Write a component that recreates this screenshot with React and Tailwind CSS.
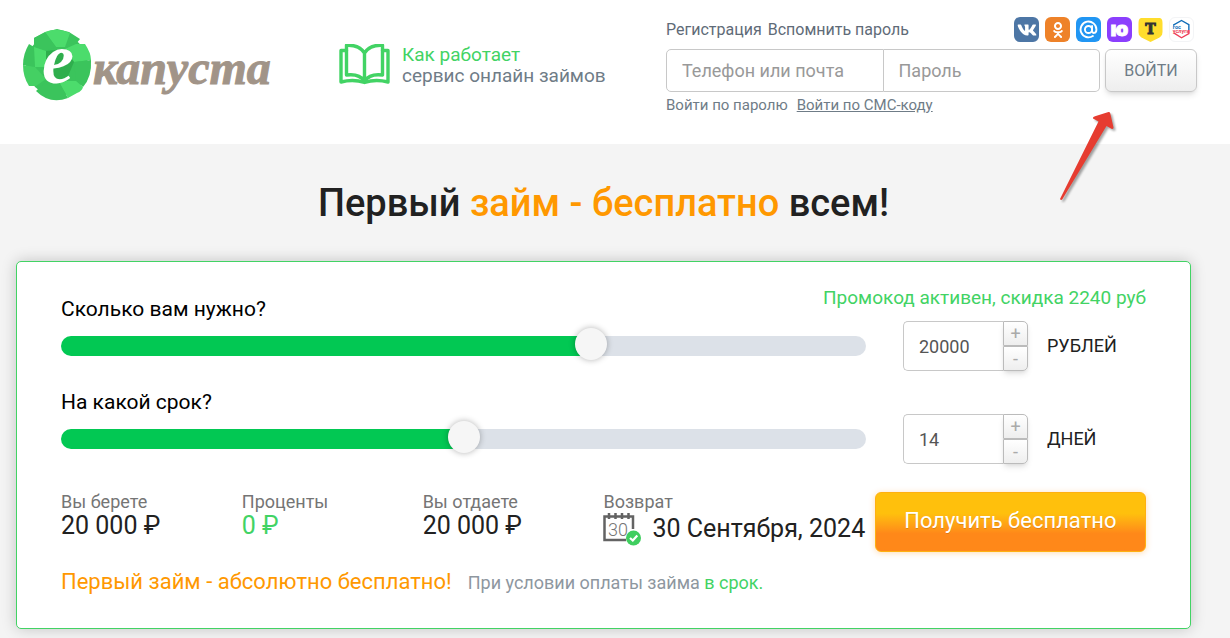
import React, { useState } from 'react';
import { FaVk, FaOdnoklassniki } from 'react-icons/fa';

const THUMB = 32;

const Logo = () => (
  <svg width="256" height="72" viewBox="0 0 256 72" className="overflow-visible" role="img" aria-label="екапуста">
    <circle cx="35" cy="36" r="31" fill="#3bc45c" />
    <path d="M12 9 L24 3 L35 0 L47 3 L58 10 L54 15 L35 12 L24 22 L12 20 Z" fill="#3bc45c" />
    <path d="M23 3 Q35 -2 48 4 L43 18 L34 18 Z" fill="#4cdc6c" />
    <path d="M12 9 L23 3 L34 18 L24 22 L12 18 Z" fill="#3bc45c" />
    <path d="M54 15 L63 15 Q69 24 69 31 L52 33 L43 20 Z" fill="#4cdc6c" />
    <path d="M69 31 Q70 48 61 58 L54 52 L52 33 Z" fill="#3bc45c" />
    <path d="M7 15 L12 18 L13 38 L1 36 Q1 25 7 15 Z" fill="#3bc45c" />
    <path d="M12 18 L24 22 L24 38 L13 38 Z" fill="#4cdc6c" />
    <path d="M1 36 L13 38 L24 50 L14 57 L7 57 Q1 48 1 36 Z" fill="#44d063" />
    <path d="M24 22 L43 20 L52 33 L44 52 L24 50 Z" fill="#2fae4d" />
    <path d="M44 52 L54 52 L61 58 Q60 62 55 64 L46 69 L37 53 Z" fill="#4cdc6c" />
    <path d="M14 62 L27 50 L37 53 L46 69 Q28 76 14 62 Z" fill="#3bc45c" />
    <text x="20" y="54" fill="#fff" className="font-['Liberation_Serif',serif] text-[72px] font-bold italic">e</text>
    <text x="71" y="55" fill="#a19488" stroke="#a19488" strokeWidth="1" className="font-['Liberation_Serif',serif] text-[48px] font-bold italic">капуста</text>
  </svg>
);

const BookIcon = () => (
  <svg width="51" height="42" viewBox="0 0 51 42" fill="none" stroke="#42d364" strokeWidth="3.400" strokeLinejoin="round" strokeLinecap="round">
    <path d="M25.500 9 C22 3.500 16 0.800 7.500 1.300 V31 C15 30 22 32 25.500 37 C29 32 36 30 43.500 31 V1.300 C35 0.800 29 3.500 25.500 9 V37" />
    <path d="M7.500 6.500 H2 V38 C10 36 18 36 25.500 38.500 C33 36 41 36 49 38 V6.500 H43.500" />
  </svg>
);

const CalendarIcon = () => (
  <svg width="39" height="34" viewBox="0 0 39 34" fill="none">
    <path d="M23 28 H1.500 V4.500 H30 V17" stroke="#636363" strokeWidth="2.500" />
    <path d="M6 1 V7 M12.500 1 V7 M19 1 V7 M25.500 1 V7" stroke="#636363" strokeWidth="2.500" />
    <text x="5" y="24" fill="#757575" className="text-[18px] font-light">30</text>
    <circle cx="30.500" cy="26" r="7.500" fill="#3fce5f" />
    <path d="M27 26 L29.800 28.500 L34.300 23.500" stroke="#fff" strokeWidth="2.200" />
  </svg>
);

const MailIcon = () => (
  <svg width="19" height="19" viewBox="0 0 24 24" fill="none" stroke="#fff" strokeWidth="2.400" strokeLinecap="round">
    <circle cx="12" cy="12" r="4.500" />
    <path d="M16.500 7.500 V13.500 C16.500 17.500 22 17.500 22 12 A10 10 0 1 0 17.500 20.300" />
  </svg>
);

const YooIcon = () => (
  <svg width="25" height="25" viewBox="0 0 25 25">
    <text x="12.500" y="19" textAnchor="middle" fill="#fff" stroke="#fff" strokeWidth="0.800" className="font-[Inter,sans-serif] text-[20px] font-black">ю</text>
  </svg>
);

const TBankIcon = () => (
  <svg width="25" height="25" viewBox="0 0 25 25">
    <path d="M0.500 1 H24.500 V15 C24.500 18.500 22.500 20 20 21.300 L12.500 25 L5 21.300 C2.500 20 0.500 18.500 0.500 15 Z" fill="#ffdd2d" />
    <text x="12.500" y="17" textAnchor="middle" fill="#333" stroke="#333" strokeWidth="1" className="font-['DejaVu_Serif',serif] text-[14px] font-bold">T</text>
  </svg>
);

const GosuslugiIcon = () => (
  <svg width="25" height="25" viewBox="0 0 25 25" fill="none" strokeWidth="1.500">
    <path d="M4 8.500 V7.500 L12.500 2.700 L20.500 7.200 V13" stroke="#0d6bb7" />
    <path d="M4.500 16.500 L12.500 21.500 L20.500 17 V13" stroke="#ee3f58" />
    <text x="3" y="11.500" fill="#0d6bb7" className="text-[6px] font-bold">гос</text>
    <text x="3" y="16" fill="#ee3f58" className="text-[6px] font-bold">услуги</text>
  </svg>
);

const Arrow = () => (
  <svg className="absolute left-[1054px] top-[108px] pointer-events-none drop-shadow-[2px_2px_1px_rgba(0,0,0,0.35)]" width="66" height="96" viewBox="0 0 66 96">
    <path d="M6 91 L44.500 13.500 L39 10.500 Q38.500 9 41 8.300 L54.500 4 Q56 3.500 56.300 5.500 L59.500 19.500 Q59.500 21.500 57.500 20.800 L52.500 18 L8.500 91 Q7 93 6 91 Z" fill="#e63c30" />
  </svg>
);

const socials = [
  { name: 'ВКонтакте', box: 'bg-[#4d76a5]', icon: <FaVk className="text-[20px] text-white" /> },
  { name: 'Одноклассники', box: 'bg-[#ee8229]', icon: <FaOdnoklassniki className="text-[16px] text-white" /> },
  { name: 'Mail.ru', box: 'bg-[#2196f3]', icon: <MailIcon /> },
  { name: 'ЮMoney', box: 'bg-[#8b3ffd]', icon: <YooIcon /> },
  { name: 'Т-Банк', box: '', icon: <TBankIcon /> },
  { name: 'Госуслуги', box: 'border border-gray-100', icon: <GosuslugiIcon /> },
];

const LoginForm = () => (
  <div className="w-[531px]">
    <div className="flex items-center justify-between pr-[3px]">
      <div className="flex gap-1.5 text-[16px] text-[#5f6b78]">
        <a href="#register">Регистрация</a>
        <a href="#remind">Вспомнить пароль</a>
      </div>
      <div className="flex gap-1.5">
        {socials.map((item) => (
          <a
            key={item.name}
            href="#social"
            aria-label={item.name}
            className={`flex h-[25px] w-[25px] items-center justify-center overflow-hidden rounded-md ${item.box}`}
          >
            {item.icon}
          </a>
        ))}
      </div>
    </div>

    <form className="mt-[7px] flex h-[43px]" onSubmit={(event) => event.preventDefault()}>
      <input
        type="text"
        aria-label="Телефон или почта"
        placeholder="Телефон или почта"
        className="min-w-0 flex-1 rounded-l-[5px] border border-[#c8c8c8] bg-white px-[15px] text-[18px] placeholder:text-[#999]"
      />
      <input
        type="password"
        aria-label="Пароль"
        placeholder="Пароль"
        className="min-w-0 flex-1 rounded-r-[5px] border border-l-0 border-[#c8c8c8] bg-white px-[15px] text-[18px] placeholder:text-[#999]"
      />
      <button
        type="submit"
        className="ml-[5px] w-[92px] cursor-pointer rounded-md border border-[#c8c8c8] bg-linear-to-b from-white to-[#eee] text-[16px] text-[#6f7c87] shadow-md"
      >
        ВОЙТИ
      </button>
    </form>

    <div className="mt-px flex gap-[9px] text-[15px] leading-6 text-[#6f7c87]">
      <span>Войти по паролю</span>
      <a href="#sms" className="underline">Войти по СМС-коду</a>
    </div>
  </div>
);

const Header = () => (
  <header className="flex items-start bg-white pt-[17px] pr-[33px] pb-[27px] pl-[22px]">
    <div className="mt-3 flex items-center">
      <a href="#home"><Logo /></a>
      <a href="#how" className="ml-[61px] flex items-center gap-3">
        <BookIcon />
        <span className="text-[19px] leading-[21px] whitespace-nowrap text-[#6f7c87]">
          <span className="text-[#42d364]">Как работает</span>
          <br />
          сервис онлайн займов
        </span>
      </a>
    </div>
    <div className="ml-auto">
      <LoginForm />
    </div>
  </header>
);

const Field = ({ id, label, note, unit, value, min, max, step, onChange }) => {
  const ratio = (value - min) / (max - min);
  const change = (next) => onChange(Math.min(max, Math.max(min, next)));
  const stop = `calc(${THUMB / 2}px + (100% - ${THUMB}px) * ${ratio})`;

  return (
    <div>
      <div className="flex items-end justify-between leading-6">
        <label htmlFor={id} className="text-[21px] text-black">{label}</label>
        {note && <p className="pb-[11px] text-[19px] text-[#42d364]">{note}</p>}
      </div>
      <div className="flex items-center">
        <input
          id={id}
          type="range"
          min={min}
          max={max}
          step={step}
          value={value}
          onChange={(event) => change(Number(event.target.value))}
          style={{ background: `linear-gradient(to right, #02c853 ${stop}, #dce1e8 ${stop})` }}
          className="h-5 min-w-0 flex-1 cursor-pointer appearance-none rounded-full [&::-webkit-slider-runnable-track]:h-5 [&::-webkit-slider-thumb]:-mt-2 [&::-webkit-slider-thumb]:h-8 [&::-webkit-slider-thumb]:w-8 [&::-webkit-slider-thumb]:appearance-none [&::-webkit-slider-thumb]:rounded-full [&::-webkit-slider-thumb]:bg-[#f6f6f6] [&::-webkit-slider-thumb]:shadow-[0_0_6px_rgba(0,0,0,0.3)]"
        />
        <div className="ml-[37px] flex w-[243px] items-center">
          <input
            id={`${id}-value`}
            type="text"
            value={value}
            onChange={(event) => change(Number(event.target.value) || min)}
            className="h-[50px] w-[100px] rounded-l-[5px] border border-r-0 border-[#c8c8c8] px-[15px] text-[18px] text-[#555]"
          />
          <div className="flex h-[50px] w-[25px] flex-col rounded-r-[5px] text-[18px] leading-5 text-[#aaa] shadow-md">
            <button
              type="button"
              aria-label="Больше"
              onClick={() => change(value + step)}
              className="flex-1 cursor-pointer rounded-tr-[5px] border border-[#bbb] bg-linear-to-b from-white to-[#eee]"
            >
              +
            </button>
            <button
              type="button"
              aria-label="Меньше"
              onClick={() => change(value - step)}
              className="flex-1 cursor-pointer rounded-br-[5px] border border-[#bbb] bg-linear-to-b from-white to-[#eee]"
            >
              -
            </button>
          </div>
          <label htmlFor={`${id}-value`} className="ml-[19px] text-[18px] leading-6 text-[#212121]">{unit}</label>
        </div>
      </div>
    </div>
  );
};

const Stat = ({ label, children, green }) => (
  <div className="col-span-2">
    <p className="text-[18px] leading-5 text-[#757575]">{label}</p>
    <p className={green ? 'text-[25px] leading-7 text-[#42d364]' : 'text-[25px] leading-7 text-[#212121]'}>{children}</p>
  </div>
);

const App = () => {
  const [amount, setAmount] = useState(20000);
  const [days, setDays] = useState(14);
  const sum = amount.toLocaleString('ru-RU');

  return (
    <div className="relative min-h-screen overflow-x-hidden bg-[#f4f4f4] font-[Roboto,sans-serif]">
      <Header />
      <Arrow />

      <main className="pr-[39px] pb-[9px] pl-4">
        <h1 className="pt-[35px] pb-[34px] text-center text-[38px] leading-[48px] font-medium text-[#212121]">
          Первый <span className="text-[#ff9800]">займ - бесплатно</span> всем!
        </h1>

        <section className="rounded-[5px] border border-[#42d364] bg-white px-11 pt-6 pb-[31px] shadow-[0_0_15px_rgba(0,0,0,0.2)]">
          <Field
            id="amount"
            label="Сколько вам нужно?"
            note="Промокод активен, скидка 2240 руб"
            unit="РУБЛЕЙ"
            value={amount}
            min={100}
            max={30000}
            step={100}
            onChange={setAmount}
          />
          <div className="mt-[19px]">
            <Field
              id="days"
              label="На какой срок?"
              unit="ДНЕЙ"
              value={days}
              min={7}
              max={21}
              step={1}
              onChange={setDays}
            />
          </div>

          <div className="mt-7 grid grid-cols-12 whitespace-nowrap">
            <Stat label="Вы берете">{sum} ₽</Stat>
            <Stat label="Проценты" green>0 ₽</Stat>
            <Stat label="Вы отдаете">{sum} ₽</Stat>
            <div className="col-span-3">
              <p className="text-[18px] leading-5 text-[#757575]">Возврат</p>
              <div className="flex items-center gap-2.5 text-[25px] leading-8 text-[#212121]">
                <CalendarIcon />
                <span>30 Сентября, 2024</span>
              </div>
            </div>
            <button
              type="button"
              className="col-span-3 h-[60px] cursor-pointer rounded-md border border-[#ffb010] bg-linear-to-b from-[#ffc00c] from-35% to-[#ff8819] to-70% pb-1 text-[22px] text-white shadow-[0_1px_6px_rgba(255,140,0,0.3)] text-shadow-2xs"
            >
              Получить бесплатно
            </button>
          </div>

          <p className="mt-4 flex items-baseline gap-4 leading-7">
            <span className="text-[22px] text-[#ff9800]">Первый займ - абсолютно бесплатно!</span>
            <span className="text-[18px] text-[#8e979f]">
              При условии оплаты займа <a href="#terms" className="text-[#42d364]">в срок.</a>
            </span>
          </p>
        </section>
      </main>
    </div>
  );
};

export default App;
